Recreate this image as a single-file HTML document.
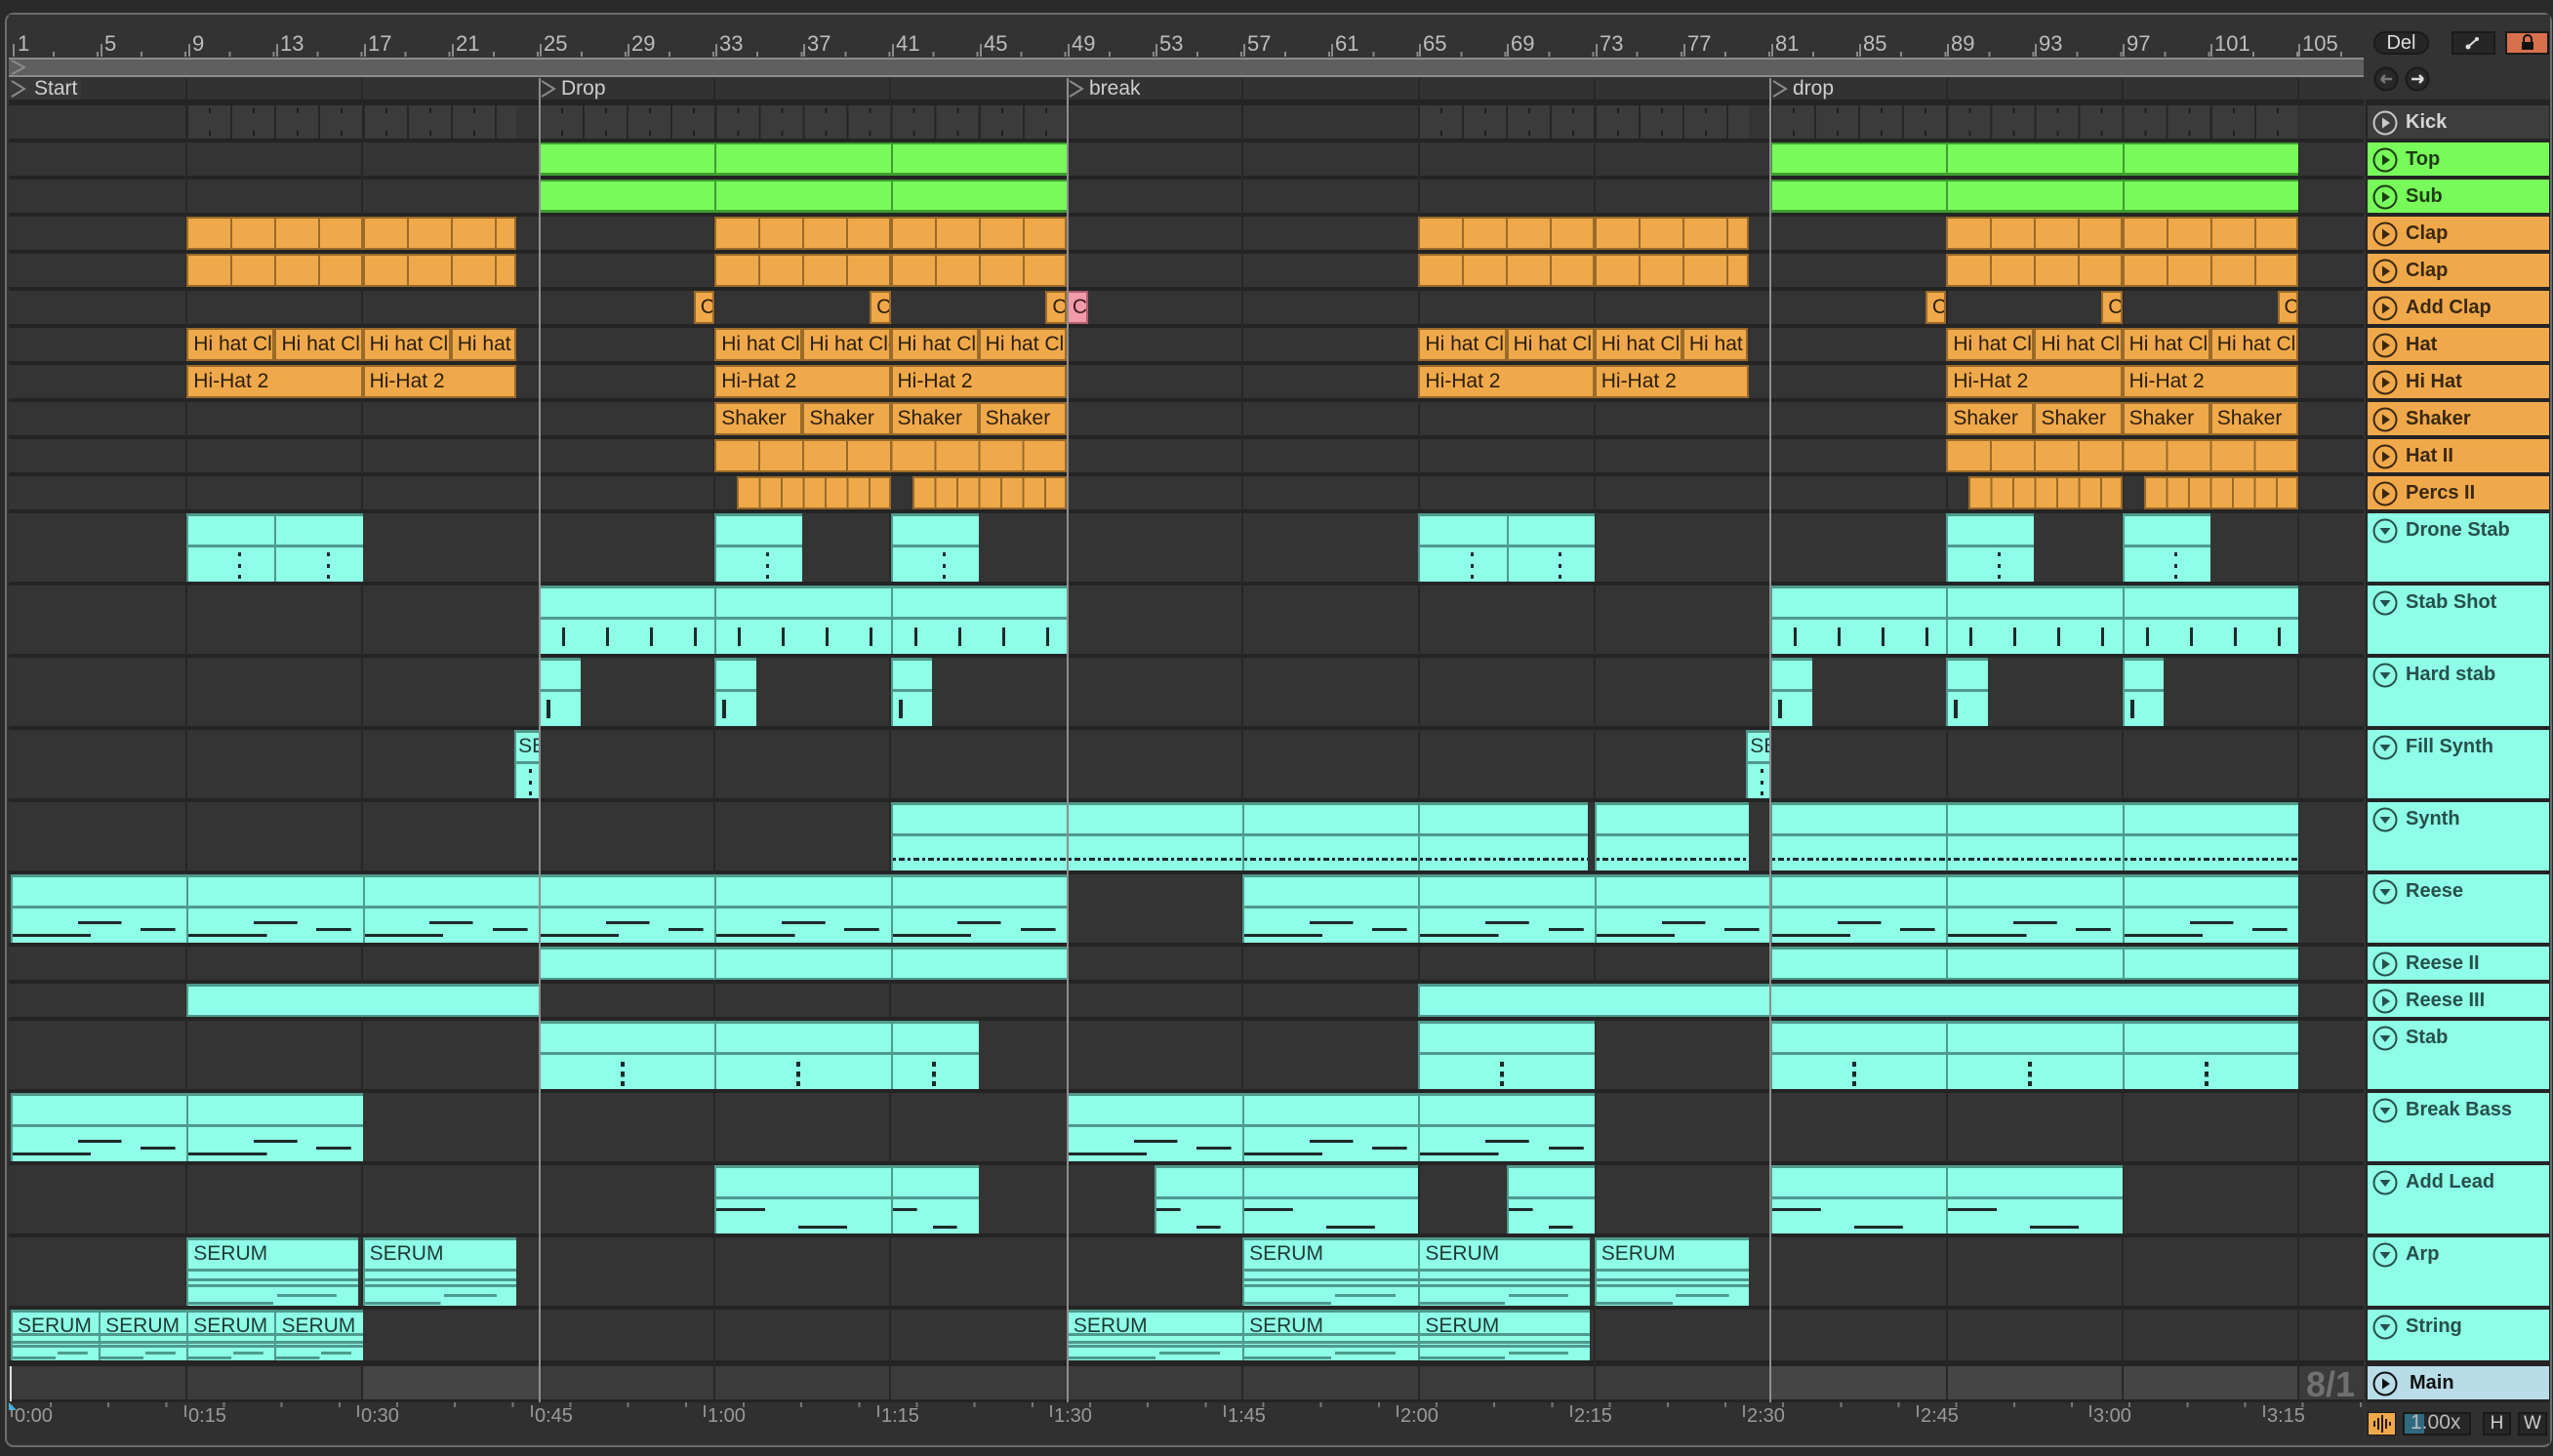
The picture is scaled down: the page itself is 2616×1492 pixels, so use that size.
<!DOCTYPE html>
<html><head><meta charset="utf-8"><style>
*{box-sizing:border-box;margin:0;padding:0}
body{width:2616px;height:1492px;background:#2a2a2a;position:relative;overflow:hidden;font-family:"Liberation Sans",sans-serif}
.abs{position:absolute}
.frame{position:absolute;left:5px;top:13px;width:2610px;height:1470px;border:2px solid #6c6c6c;border-radius:9px;background:#333}
.lane{position:absolute;left:9px;width:2413px;background:#343434}
.gl{position:absolute;top:104px;height:1333px;width:2px;background:#272727}
.loc{position:absolute;top:80px;height:1357px;width:2px;background:#8e8e8e;z-index:5}
.c{position:absolute;top:0;bottom:0;left:calc(11px + (var(--s) - 1) * 22.538px);width:calc((var(--e) - var(--s)) * 22.538px);overflow:hidden;white-space:nowrap}
.lane .c{margin-left:-9px}
.k{background:#3b3b3b;border-left:2px solid #262626;background-image:repeating-linear-gradient(90deg,transparent 0 43px,#262626 43px 45.076px),repeating-linear-gradient(90deg,transparent 0 21px,#1f1b1b 21px 23px,transparent 23px 45.076px);background-size:100% 100%,100% 5px;background-repeat:no-repeat,repeat-x;background-position:0 0,0 3px}
.k::after{content:"";position:absolute;left:0;right:0;bottom:3px;height:5px;background:repeating-linear-gradient(90deg,transparent 0 21px,#1f1b1b 21px 23px,transparent 23px 45.076px)}
.g{background:#78fb5a;border-top:2px solid #3e9e30;border-bottom:3px solid #3e9e30;border-left:2px solid #3e9e30}
.o{background:#f0a94a;border:2px solid #9a6a2a;color:#2a1e0c;font:21px "Liberation Sans Narrow","Liberation Sans",sans-serif;line-height:30px;padding-left:5px}
.o2{background-image:repeating-linear-gradient(90deg,transparent 0 43px,#9a6a2a 43px 45.076px)}
.o1{background-image:repeating-linear-gradient(90deg,transparent 0 20.5px,#9a6a2a 20.5px 22.538px)}
.p{background:#f29aa8;border:2px solid #b06070;color:#3a1a20;font:21px "Liberation Sans Narrow","Liberation Sans",sans-serif;line-height:30px;padding-left:4px}
.cy{background:#8efee6;border-top:3px solid #4e9a8c;border-left:2px solid #4e9a8c;color:#1f3a35;font:21px "Liberation Sans Narrow","Liberation Sans",sans-serif;line-height:28px;padding-left:5px}
.cy.h::before{content:"";position:absolute;left:0;right:0;top:43%;height:3px;background:#4e9a8c}
.cy.sm{border-bottom:2px solid #4e9a8c}
.rs::after{content:"";position:absolute;left:0;right:0;top:55%;bottom:0;background:linear-gradient(#1c2a28,#1c2a28) 0 78%/45% 3px no-repeat,linear-gradient(#1c2a28,#1c2a28) 50% 30%/25% 3px no-repeat,linear-gradient(#1c2a28,#1c2a28) 92% 55%/20% 3px no-repeat}
.ss::after{content:"";position:absolute;left:0;right:0;top:60%;height:28%;background:repeating-linear-gradient(90deg,transparent 0 22px,#1c2a28 22px 25px,transparent 25px 45.076px)}
.sy::after{content:"";position:absolute;left:0;right:0;top:80%;height:3px;background:repeating-linear-gradient(90deg,#1c2a28 0 3px,transparent 3px 6px,#1c2a28 6px 12px,transparent 12px 15px)}
.dr::after{content:"";position:absolute;left:58%;top:55%;width:3px;height:40%;background:linear-gradient(#1c2a28 0 15%,transparent 15% 45%,#1c2a28 45% 60%,transparent 60% 85%,#1c2a28 85%)}
.st::after{content:"";position:absolute;left:46%;top:58%;width:4px;height:38%;background:linear-gradient(#1c2a28 0 20%,transparent 20% 40%,#1c2a28 40% 62%,transparent 62% 80%,#1c2a28 80%)}
.hs::after{content:"";position:absolute;left:6px;top:60%;width:4px;height:28%;background:#1c2a28}
.al::after{content:"";position:absolute;left:0;right:0;top:50%;bottom:0;background:linear-gradient(#1c2a28,#1c2a28) 0 25%/28% 3px no-repeat,linear-gradient(#1c2a28,#1c2a28) 65% 85%/28% 3px no-repeat}
.se::after{content:"";position:absolute;left:0;right:0;top:52%;bottom:0;background:linear-gradient(#4e9a8c,#4e9a8c) 0 15%/100% 3px no-repeat,linear-gradient(#4e9a8c,#4e9a8c) 0 35%/100% 3px no-repeat,linear-gradient(#4e9a8c,#4e9a8c) 80% 70%/35% 3px no-repeat,linear-gradient(#4e9a8c,#4e9a8c) 0 95%/50% 3px no-repeat}
.hd{position:absolute;left:2426px;width:186px;font:bold 20px "Liberation Sans","DejaVu Sans",sans-serif;padding-left:39px;line-height:34px;white-space:nowrap}
.hd svg{position:absolute;left:5px;top:5px}
.ho{background:#f0a94a;color:#3a2810}
.hg{background:#78fb5a;color:#1d3d14}
.hc{background:#8efee6;color:#26504a}
.rn{position:absolute;top:34px;font:22px "Liberation Sans Narrow","Liberation Sans",sans-serif;color:#bdbdbd;line-height:22px}
.rt{position:absolute;top:45px;width:2px;height:13px;background:#8a8a8a}
.tn{position:absolute;top:1440px;font:20px "Liberation Sans Narrow","Liberation Sans",sans-serif;color:#9a9a9a}
.tt{position:absolute;top:1440px;width:2px;height:12px;background:#8a8a8a}
.lb{position:absolute;top:80px;height:22px;font:21px "Liberation Sans Narrow","Liberation Sans",sans-serif;color:#cfcfcf;line-height:22px;padding:0 4px 0 30px;background:#383838}
</style></head><body>
<div class="frame"></div>
<!-- ruler -->
<div class="abs" style="left:9px;top:15px;width:2413px;height:44px;background:#333"></div>
<div class="abs" style="left:9px;top:53px;width:2413px;height:5px;background:repeating-linear-gradient(90deg,transparent 0 43px,#8a8a8a 43px 45px,transparent 45px 45.076px);background-position:2px 0"></div>
<div class="rt" style="left:13px"></div><div class="rt" style="left:103px"></div><div class="rt" style="left:193px"></div><div class="rt" style="left:283px"></div><div class="rt" style="left:373px"></div><div class="rt" style="left:463px"></div><div class="rt" style="left:553px"></div><div class="rt" style="left:643px"></div><div class="rt" style="left:733px"></div><div class="rt" style="left:823px"></div><div class="rt" style="left:914px"></div><div class="rt" style="left:1004px"></div><div class="rt" style="left:1094px"></div><div class="rt" style="left:1184px"></div><div class="rt" style="left:1274px"></div><div class="rt" style="left:1364px"></div><div class="rt" style="left:1454px"></div><div class="rt" style="left:1544px"></div><div class="rt" style="left:1635px"></div><div class="rt" style="left:1725px"></div><div class="rt" style="left:1815px"></div><div class="rt" style="left:1905px"></div><div class="rt" style="left:1995px"></div><div class="rt" style="left:2085px"></div><div class="rt" style="left:2175px"></div><div class="rt" style="left:2265px"></div><div class="rt" style="left:2355px"></div>
<div class="rn" style="left:18px">1</div>
<div class="rn" style="left:107px">5</div><div class="rn" style="left:197px">9</div><div class="rn" style="left:287px">13</div><div class="rn" style="left:377px">17</div><div class="rn" style="left:467px">21</div><div class="rn" style="left:557px">25</div><div class="rn" style="left:647px">29</div><div class="rn" style="left:737px">33</div><div class="rn" style="left:827px">37</div><div class="rn" style="left:918px">41</div><div class="rn" style="left:1008px">45</div><div class="rn" style="left:1098px">49</div><div class="rn" style="left:1188px">53</div><div class="rn" style="left:1278px">57</div><div class="rn" style="left:1368px">61</div><div class="rn" style="left:1458px">65</div><div class="rn" style="left:1548px">69</div><div class="rn" style="left:1639px">73</div><div class="rn" style="left:1729px">77</div><div class="rn" style="left:1819px">81</div><div class="rn" style="left:1909px">85</div><div class="rn" style="left:1999px">89</div><div class="rn" style="left:2089px">93</div><div class="rn" style="left:2179px">97</div><div class="rn" style="left:2269px">101</div><div class="rn" style="left:2359px">105</div>
<!-- scrub -->
<div class="abs" style="left:9px;top:59px;width:2413px;height:20px;background:#5f5f5f;border-top:2px solid #8c8c8c;border-bottom:2px solid #8c8c8c"></div>
<svg class="abs" style="left:10px;top:60px" width="20" height="18"><path d="M2 2 L15 9 L2 16" fill="none" stroke="#8a8a8a" stroke-width="2"/></svg>
<!-- locator row + lanes bg -->
<div class="abs" style="left:9px;top:80px;width:2413px;height:1357px;background:#242424"></div>
<div class="lane" style="top:80px;height:22px;background:#323232"></div>
<div class="lane" style="top:108px;height:34px"></div><div class="lane" style="top:146px;height:34px"></div><div class="lane" style="top:184px;height:34px"></div><div class="lane" style="top:222px;height:34px"></div><div class="lane" style="top:260px;height:34px"></div><div class="lane" style="top:298px;height:34px"></div><div class="lane" style="top:336px;height:34px"></div><div class="lane" style="top:374px;height:34px"></div><div class="lane" style="top:412px;height:34px"></div><div class="lane" style="top:450px;height:34px"></div><div class="lane" style="top:488px;height:34px"></div>
<div class="lane" style="top:526px;height:70px"></div><div class="lane" style="top:600px;height:70px"></div><div class="lane" style="top:674px;height:70px"></div><div class="lane" style="top:748px;height:70px"></div><div class="lane" style="top:822px;height:70px"></div><div class="lane" style="top:896px;height:70px"></div>
<div class="lane" style="top:970px;height:34px"></div><div class="lane" style="top:1008px;height:34px"></div>
<div class="lane" style="top:1046px;height:70px"></div><div class="lane" style="top:1120px;height:70px"></div><div class="lane" style="top:1194px;height:70px"></div><div class="lane" style="top:1268px;height:70px"></div><div class="lane" style="top:1342px;height:52px"></div>
<div class="lane" style="top:1400px;height:34px;background:#3b3b3b"></div>
<div class="abs" style="left:371px;top:1400px;width:181px;height:34px;background:#454545"></div>
<div class="abs" style="left:1814px;top:1400px;width:541px;height:34px;background:#454545"></div>
<!-- grid lines -->
<div class="gl" style="left:190px;top:80px;height:1357px"></div><div class="gl" style="left:370px;top:80px;height:1357px"></div><div class="gl" style="left:731px;top:80px;height:1357px"></div><div class="gl" style="left:911px;top:80px;height:1357px"></div><div class="gl" style="left:1272px;top:80px;height:1357px"></div><div class="gl" style="left:1453px;top:80px;height:1357px"></div><div class="gl" style="left:1633px;top:80px;height:1357px"></div><div class="gl" style="left:1994px;top:80px;height:1357px"></div><div class="gl" style="left:2174px;top:80px;height:1357px"></div><div class="gl" style="left:2354px;top:80px;height:1357px"></div>
<!-- locator labels -->
<div class="lb" style="left:9px;padding-left:26px">Start</div>
<div class="lb" style="left:553px;padding-left:22px;background:none">Drop</div>
<div class="lb" style="left:1094px;padding-left:22px;background:none">break</div>
<div class="lb" style="left:1815px;padding-left:22px;background:none">drop</div>
<svg class="abs" style="left:10px;top:81px" width="20" height="20"><path d="M2 2 L15 10 L2 18" fill="none" stroke="#8a8a8a" stroke-width="2"/></svg>
<svg class="abs" style="left:553px;top:81px" width="20" height="20"><path d="M2 2 L15 10 L2 18" fill="none" stroke="#8a8a8a" stroke-width="2"/></svg>
<svg class="abs" style="left:1094px;top:81px" width="20" height="20"><path d="M2 2 L15 10 L2 18" fill="none" stroke="#8a8a8a" stroke-width="2"/></svg>
<svg class="abs" style="left:1815px;top:81px" width="20" height="20"><path d="M2 2 L15 10 L2 18" fill="none" stroke="#8a8a8a" stroke-width="2"/></svg>

<!-- Kick -->
<div class="lane" style="top:108px;height:34px;background:transparent">
<div class="c k" style="--s:9;--e:17"></div><div class="c k" style="--s:17;--e:24"></div><div class="c k" style="--s:25;--e:49"></div><div class="c k" style="--s:65;--e:73"></div><div class="c k" style="--s:73;--e:80"></div><div class="c k" style="--s:81;--e:105"></div></div>
<!-- Top / Sub -->
<div class="lane" style="top:146px;height:34px;background:transparent"><div class="c g" style="--s:25;--e:33"></div><div class="c g" style="--s:33;--e:41"></div><div class="c g" style="--s:41;--e:49"></div><div class="c g" style="--s:81;--e:89"></div><div class="c g" style="--s:89;--e:97"></div><div class="c g" style="--s:97;--e:105"></div></div>
<div class="lane" style="top:184px;height:34px;background:transparent"><div class="c g" style="--s:25;--e:33"></div><div class="c g" style="--s:33;--e:41"></div><div class="c g" style="--s:41;--e:49"></div><div class="c g" style="--s:81;--e:89"></div><div class="c g" style="--s:89;--e:97"></div><div class="c g" style="--s:97;--e:105"></div></div>
<!-- Clap x2 -->
<div class="lane" style="top:222px;height:34px;background:transparent"><div class="c o o2" style="--s:9;--e:17"></div><div class="c o o2" style="--s:17;--e:24"></div><div class="c o o2" style="--s:33;--e:41"></div><div class="c o o2" style="--s:41;--e:49"></div><div class="c o o2" style="--s:65;--e:73"></div><div class="c o o2" style="--s:73;--e:80"></div><div class="c o o2" style="--s:89;--e:97"></div><div class="c o o2" style="--s:97;--e:105"></div></div>
<div class="lane" style="top:260px;height:34px;background:transparent"><div class="c o o2" style="--s:9;--e:17"></div><div class="c o o2" style="--s:17;--e:24"></div><div class="c o o2" style="--s:33;--e:41"></div><div class="c o o2" style="--s:41;--e:49"></div><div class="c o o2" style="--s:65;--e:73"></div><div class="c o o2" style="--s:73;--e:80"></div><div class="c o o2" style="--s:89;--e:97"></div><div class="c o o2" style="--s:97;--e:105"></div></div>
<!-- Add Clap -->
<div class="lane" style="top:298px;height:34px;background:transparent"><div class="c o" style="--s:32.05;--e:33">Clap</div><div class="c o" style="--s:40.05;--e:41">Clap</div><div class="c o" style="--s:48.05;--e:49">Clap</div><div class="c p" style="--s:49;--e:50">Clap</div><div class="c o" style="--s:88.05;--e:89">Clap</div><div class="c o" style="--s:96.05;--e:97">Clap</div><div class="c o" style="--s:104.05;--e:105">Clap</div></div>
<!-- Hat -->
<div class="lane" style="top:336px;height:34px;background:transparent"><div class="c o" style="--s:9;--e:13">Hi hat Closed</div><div class="c o" style="--s:13;--e:17">Hi hat Closed</div><div class="c o" style="--s:17;--e:21">Hi hat Closed</div><div class="c o" style="--s:21;--e:24">Hi hat Closed</div><div class="c o" style="--s:33;--e:37">Hi hat Closed</div><div class="c o" style="--s:37;--e:41">Hi hat Closed</div><div class="c o" style="--s:41;--e:45">Hi hat Closed</div><div class="c o" style="--s:45;--e:49">Hi hat Closed</div><div class="c o" style="--s:65;--e:69">Hi hat Closed</div><div class="c o" style="--s:69;--e:73">Hi hat Closed</div><div class="c o" style="--s:73;--e:77">Hi hat Closed</div><div class="c o" style="--s:77;--e:80">Hi hat Closed</div><div class="c o" style="--s:89;--e:93">Hi hat Closed</div><div class="c o" style="--s:93;--e:97">Hi hat Closed</div><div class="c o" style="--s:97;--e:101">Hi hat Closed</div><div class="c o" style="--s:101;--e:105">Hi hat Closed</div></div>
<!-- Hi Hat -->
<div class="lane" style="top:374px;height:34px;background:transparent"><div class="c o" style="--s:9;--e:17">Hi-Hat 2</div><div class="c o" style="--s:17;--e:24">Hi-Hat 2</div><div class="c o" style="--s:33;--e:41">Hi-Hat 2</div><div class="c o" style="--s:41;--e:49">Hi-Hat 2</div><div class="c o" style="--s:65;--e:73">Hi-Hat 2</div><div class="c o" style="--s:73;--e:80">Hi-Hat 2</div><div class="c o" style="--s:89;--e:97">Hi-Hat 2</div><div class="c o" style="--s:97;--e:105">Hi-Hat 2</div></div>
<!-- Shaker -->
<div class="lane" style="top:412px;height:34px;background:transparent"><div class="c o" style="--s:33;--e:37">Shaker</div><div class="c o" style="--s:37;--e:41">Shaker</div><div class="c o" style="--s:41;--e:45">Shaker</div><div class="c o" style="--s:45;--e:49">Shaker</div><div class="c o" style="--s:89;--e:93">Shaker</div><div class="c o" style="--s:93;--e:97">Shaker</div><div class="c o" style="--s:97;--e:101">Shaker</div><div class="c o" style="--s:101;--e:105">Shaker</div></div>
<!-- Hat II -->
<div class="lane" style="top:450px;height:34px;background:transparent"><div class="c o o2" style="--s:33;--e:49"></div><div class="c o o2" style="--s:89;--e:105"></div></div>
<!-- Percs II -->
<div class="lane" style="top:488px;height:34px;background:transparent"><div class="c o o1" style="--s:34;--e:41"></div><div class="c o o1" style="--s:42;--e:49"></div><div class="c o o1" style="--s:90;--e:97"></div><div class="c o o1" style="--s:98;--e:105"></div></div>
<!-- Drone Stab -->
<div class="lane" style="top:526px;height:70px;background:transparent"><div class="c cy h dr" style="--s:9;--e:13"></div><div class="c cy h dr" style="--s:13;--e:17"></div><div class="c cy h dr" style="--s:33;--e:37"></div><div class="c cy h dr" style="--s:41;--e:45"></div><div class="c cy h dr" style="--s:65;--e:69"></div><div class="c cy h dr" style="--s:69;--e:73"></div><div class="c cy h dr" style="--s:89;--e:93"></div><div class="c cy h dr" style="--s:97;--e:101"></div></div>
<!-- Stab Shot -->
<div class="lane" style="top:600px;height:70px;background:transparent"><div class="c cy h ss" style="--s:25;--e:33"></div><div class="c cy h ss" style="--s:33;--e:41"></div><div class="c cy h ss" style="--s:41;--e:49"></div><div class="c cy h ss" style="--s:81;--e:89"></div><div class="c cy h ss" style="--s:89;--e:97"></div><div class="c cy h ss" style="--s:97;--e:105"></div></div>
<!-- Hard stab -->
<div class="lane" style="top:674px;height:70px;background:transparent"><div class="c cy h hs" style="--s:25;--e:26.9"></div><div class="c cy h hs" style="--s:33;--e:34.9"></div><div class="c cy h hs" style="--s:41;--e:42.9"></div><div class="c cy h hs" style="--s:81;--e:82.9"></div><div class="c cy h hs" style="--s:89;--e:90.9"></div><div class="c cy h hs" style="--s:97;--e:98.9"></div></div>
<!-- Fill Synth -->
<div class="lane" style="top:748px;height:70px;background:transparent"><div class="c cy h dr" style="--s:23.9;--e:25;padding-left:2px">SERUM</div><div class="c cy h dr" style="--s:79.9;--e:81;padding-left:2px">SERUM</div></div>
<!-- Synth -->
<div class="lane" style="top:822px;height:70px;background:transparent"><div class="c cy h sy" style="--s:41;--e:49"></div><div class="c cy h sy" style="--s:49;--e:57"></div><div class="c cy h sy" style="--s:57;--e:65"></div><div class="c cy h sy" style="--s:65;--e:72.7"></div><div class="c cy h sy" style="--s:73;--e:80"></div><div class="c cy h sy" style="--s:81;--e:89"></div><div class="c cy h sy" style="--s:89;--e:97"></div><div class="c cy h sy" style="--s:97;--e:105"></div></div>
<!-- Reese -->
<div class="lane" style="top:896px;height:70px;background:transparent"><div class="c cy h rs" style="--s:1;--e:9"></div><div class="c cy h rs" style="--s:9;--e:17"></div><div class="c cy h rs" style="--s:17;--e:25"></div><div class="c cy h rs" style="--s:25;--e:33"></div><div class="c cy h rs" style="--s:33;--e:41"></div><div class="c cy h rs" style="--s:41;--e:49"></div><div class="c cy h rs" style="--s:57;--e:65"></div><div class="c cy h rs" style="--s:65;--e:73"></div><div class="c cy h rs" style="--s:73;--e:81"></div><div class="c cy h rs" style="--s:81;--e:89"></div><div class="c cy h rs" style="--s:89;--e:97"></div><div class="c cy h rs" style="--s:97;--e:105"></div></div>
<!-- Reese II / III -->
<div class="lane" style="top:970px;height:34px;background:transparent"><div class="c cy sm" style="--s:25;--e:33"></div><div class="c cy sm" style="--s:33;--e:41"></div><div class="c cy sm" style="--s:41;--e:49"></div><div class="c cy sm" style="--s:81;--e:89"></div><div class="c cy sm" style="--s:89;--e:97"></div><div class="c cy sm" style="--s:97;--e:105"></div></div>
<div class="lane" style="top:1008px;height:34px;background:transparent"><div class="c cy sm" style="--s:9;--e:25"></div><div class="c cy sm" style="--s:65;--e:105"></div></div>
<!-- Stab -->
<div class="lane" style="top:1046px;height:70px;background:transparent"><div class="c cy h st" style="--s:25;--e:33"></div><div class="c cy h st" style="--s:33;--e:41"></div><div class="c cy h st" style="--s:41;--e:45"></div><div class="c cy h st" style="--s:65;--e:73"></div><div class="c cy h st" style="--s:81;--e:89"></div><div class="c cy h st" style="--s:89;--e:97"></div><div class="c cy h st" style="--s:97;--e:105"></div></div>
<!-- Break Bass -->
<div class="lane" style="top:1120px;height:70px;background:transparent"><div class="c cy h rs" style="--s:1;--e:9"></div><div class="c cy h rs" style="--s:9;--e:17"></div><div class="c cy h rs" style="--s:49;--e:57"></div><div class="c cy h rs" style="--s:57;--e:65"></div><div class="c cy h rs" style="--s:65;--e:73"></div></div>
<!-- Add Lead -->
<div class="lane" style="top:1194px;height:70px;background:transparent"><div class="c cy h al" style="--s:33;--e:41"></div><div class="c cy h al" style="--s:41;--e:45"></div><div class="c cy h al" style="--s:53;--e:57"></div><div class="c cy h al" style="--s:57;--e:65"></div><div class="c cy h al" style="--s:69;--e:73"></div><div class="c cy h al" style="--s:81;--e:89"></div><div class="c cy h al" style="--s:89;--e:97"></div></div>
<!-- Arp -->
<div class="lane" style="top:1268px;height:70px;background:transparent"><div class="c cy h se" style="--s:9;--e:16.8">SERUM</div><div class="c cy h se" style="--s:17;--e:24">SERUM</div><div class="c cy h se" style="--s:57;--e:65">SERUM</div><div class="c cy h se" style="--s:65;--e:72.8">SERUM</div><div class="c cy h se" style="--s:73;--e:80">SERUM</div></div>
<!-- String -->
<div class="lane" style="top:1342px;height:52px;background:transparent"><div class="c cy h se" style="--s:1;--e:5">SERUM</div><div class="c cy h se" style="--s:5;--e:9">SERUM</div><div class="c cy h se" style="--s:9;--e:13">SERUM</div><div class="c cy h se" style="--s:13;--e:17">SERUM</div><div class="c cy h se" style="--s:49;--e:57">SERUM</div><div class="c cy h se" style="--s:57;--e:65">SERUM</div><div class="c cy h se" style="--s:65;--e:72.8">SERUM</div></div>

<!-- locator lines -->
<div class="loc" style="left:552px"></div><div class="loc" style="left:1093px"></div><div class="loc" style="left:1813px"></div>
<div class="abs" style="left:10px;top:1400px;width:2px;height:36px;background:#ddd"></div>
<div class="abs" style="left:2363px;top:1398px;font:bold 36px 'Liberation Sans Narrow','Liberation Sans',sans-serif;color:#707070">8/1</div>

<!-- time ruler -->
<div class="abs" style="left:9px;top:1437px;width:2413px;height:42px;background:#303030"></div>
<div class="abs" style="left:9px;top:1437px;width:2413px;height:5px;background:repeating-linear-gradient(90deg,transparent 0 31px,#777 31px 33px,transparent 33px 59.17px);background-position:11px 0"></div>
<div class="tt" style="left:11px"></div><div class="tn" style="left:15px">0:00</div>
<div class="tt" style="left:189px"></div><div class="tn" style="left:193px">0:15</div>
<div class="tt" style="left:366px"></div><div class="tn" style="left:370px">0:30</div>
<div class="tt" style="left:544px"></div><div class="tn" style="left:548px">0:45</div>
<div class="tt" style="left:721px"></div><div class="tn" style="left:725px">1:00</div>
<div class="tt" style="left:899px"></div><div class="tn" style="left:903px">1:15</div>
<div class="tt" style="left:1076px"></div><div class="tn" style="left:1080px">1:30</div>
<div class="tt" style="left:1254px"></div><div class="tn" style="left:1258px">1:45</div>
<div class="tt" style="left:1431px"></div><div class="tn" style="left:1435px">2:00</div>
<div class="tt" style="left:1609px"></div><div class="tn" style="left:1613px">2:15</div>
<div class="tt" style="left:1786px"></div><div class="tn" style="left:1790px">2:30</div>
<div class="tt" style="left:1964px"></div><div class="tn" style="left:1968px">2:45</div>
<div class="tt" style="left:2141px"></div><div class="tn" style="left:2145px">3:00</div>
<div class="tt" style="left:2319px"></div><div class="tn" style="left:2323px">3:15</div>
<svg class="abs" style="left:9px;top:1437px" width="10" height="10"><path d="M0 0 L8 8 L0 8Z" fill="#4bb0d8"/></svg>

<!-- header panel top -->
<div class="abs" style="left:2424px;top:15px;width:189px;height:87px;background:#333"></div>
<div class="abs" style="left:2432px;top:32px;width:57px;height:24px;border-radius:12px;background:#262626;border:2px solid #1a1a1a;color:#ddd;font:20px 'Liberation Sans',sans-serif;text-align:center;line-height:20px">Del</div>
<div class="abs" style="left:2512px;top:32px;width:45px;height:24px;background:#262626;border:2px solid #1a1a1a"></div>
<svg class="abs" style="left:2524px;top:35px" width="20" height="18"><path d="M5 13 L14 5" stroke="#ddd" stroke-width="2"/><circle cx="5" cy="13" r="2.5" fill="#ddd"/><circle cx="14" cy="5" r="2" fill="#ddd"/></svg>
<div class="abs" style="left:2567px;top:32px;width:45px;height:24px;background:#d8704e;border:2px solid #1a1a1a"></div>
<svg class="abs" style="left:2581px;top:35px" width="18" height="18"><path d="M5 8 V5 a4 4 0 0 1 8 0 V8" fill="none" stroke="#111" stroke-width="2"/><rect x="3" y="8" width="12" height="8" fill="#111"/></svg>
<svg class="abs" style="left:2432px;top:68px" width="60" height="26"><circle cx="13" cy="13" r="11.5" fill="#282828" stroke="#1a1a1a" stroke-width="2"/><path d="M8 13 H19 M8 13 L12 9 M8 13 L12 17" stroke="#777" stroke-width="2.5" fill="none"/><circle cx="45" cy="13" r="11.5" fill="#282828" stroke="#1a1a1a" stroke-width="2"/><path d="M51 13 H39 M51 13 L47 9 M51 13 L47 17" stroke="#ddd" stroke-width="2.5" fill="none"/></svg>
<div class="abs" style="left:2424px;top:102px;width:189px;height:1335px;background:#242424"></div>

<!-- headers -->
<div class="hd" style="top:108px;height:34px;background:#3d3d3d;color:#d6d6d6"><svg width="26" height="26"><circle cx="13" cy="13" r="11.5" fill="none" stroke="#c8c8c8" stroke-width="2"/><path d="M10 7.5 L18 13 L10 18.5Z" fill="#c8c8c8"/></svg>Kick</div>
<div class="hd hg" style="top:146px;height:34px"><svg width="26" height="26"><circle cx="13" cy="13" r="11.5" fill="none" stroke="#1d3d14" stroke-width="2"/><path d="M10 7.5 L18 13 L10 18.5Z" fill="#1d3d14"/></svg>Top</div>
<div class="hd hg" style="top:184px;height:34px"><svg width="26" height="26"><circle cx="13" cy="13" r="11.5" fill="none" stroke="#1d3d14" stroke-width="2"/><path d="M10 7.5 L18 13 L10 18.5Z" fill="#1d3d14"/></svg>Sub</div>
<div class="hd ho" style="top:222px;height:34px"><svg width="26" height="26"><circle cx="13" cy="13" r="11.5" fill="none" stroke="#3a2810" stroke-width="2"/><path d="M10 7.5 L18 13 L10 18.5Z" fill="#3a2810"/></svg>Clap</div>
<div class="hd ho" style="top:260px;height:34px"><svg width="26" height="26"><circle cx="13" cy="13" r="11.5" fill="none" stroke="#3a2810" stroke-width="2"/><path d="M10 7.5 L18 13 L10 18.5Z" fill="#3a2810"/></svg>Clap</div>
<div class="hd ho" style="top:298px;height:34px"><svg width="26" height="26"><circle cx="13" cy="13" r="11.5" fill="none" stroke="#3a2810" stroke-width="2"/><path d="M10 7.5 L18 13 L10 18.5Z" fill="#3a2810"/></svg>Add Clap</div>
<div class="hd ho" style="top:336px;height:34px"><svg width="26" height="26"><circle cx="13" cy="13" r="11.5" fill="none" stroke="#3a2810" stroke-width="2"/><path d="M10 7.5 L18 13 L10 18.5Z" fill="#3a2810"/></svg>Hat</div>
<div class="hd ho" style="top:374px;height:34px"><svg width="26" height="26"><circle cx="13" cy="13" r="11.5" fill="none" stroke="#3a2810" stroke-width="2"/><path d="M10 7.5 L18 13 L10 18.5Z" fill="#3a2810"/></svg>Hi Hat</div>
<div class="hd ho" style="top:412px;height:34px"><svg width="26" height="26"><circle cx="13" cy="13" r="11.5" fill="none" stroke="#3a2810" stroke-width="2"/><path d="M10 7.5 L18 13 L10 18.5Z" fill="#3a2810"/></svg>Shaker</div>
<div class="hd ho" style="top:450px;height:34px"><svg width="26" height="26"><circle cx="13" cy="13" r="11.5" fill="none" stroke="#3a2810" stroke-width="2"/><path d="M10 7.5 L18 13 L10 18.5Z" fill="#3a2810"/></svg>Hat II</div>
<div class="hd ho" style="top:488px;height:34px"><svg width="26" height="26"><circle cx="13" cy="13" r="11.5" fill="none" stroke="#3a2810" stroke-width="2"/><path d="M10 7.5 L18 13 L10 18.5Z" fill="#3a2810"/></svg>Percs II</div>
<div class="hd hc" style="top:526px;height:70px"><svg width="26" height="26"><circle cx="13" cy="13" r="11.5" fill="none" stroke="#26504a" stroke-width="2"/><path d="M7.5 10 L18.5 10 L13 17Z" fill="#26504a"/></svg>Drone Stab</div>
<div class="hd hc" style="top:600px;height:70px"><svg width="26" height="26"><circle cx="13" cy="13" r="11.5" fill="none" stroke="#26504a" stroke-width="2"/><path d="M7.5 10 L18.5 10 L13 17Z" fill="#26504a"/></svg>Stab Shot</div>
<div class="hd hc" style="top:674px;height:70px"><svg width="26" height="26"><circle cx="13" cy="13" r="11.5" fill="none" stroke="#26504a" stroke-width="2"/><path d="M7.5 10 L18.5 10 L13 17Z" fill="#26504a"/></svg>Hard stab</div>
<div class="hd hc" style="top:748px;height:70px"><svg width="26" height="26"><circle cx="13" cy="13" r="11.5" fill="none" stroke="#26504a" stroke-width="2"/><path d="M7.5 10 L18.5 10 L13 17Z" fill="#26504a"/></svg>Fill Synth</div>
<div class="hd hc" style="top:822px;height:70px"><svg width="26" height="26"><circle cx="13" cy="13" r="11.5" fill="none" stroke="#26504a" stroke-width="2"/><path d="M7.5 10 L18.5 10 L13 17Z" fill="#26504a"/></svg>Synth</div>
<div class="hd hc" style="top:896px;height:70px"><svg width="26" height="26"><circle cx="13" cy="13" r="11.5" fill="none" stroke="#26504a" stroke-width="2"/><path d="M7.5 10 L18.5 10 L13 17Z" fill="#26504a"/></svg>Reese</div>
<div class="hd hc" style="top:970px;height:34px"><svg width="26" height="26"><circle cx="13" cy="13" r="11.5" fill="none" stroke="#26504a" stroke-width="2"/><path d="M10 7.5 L18 13 L10 18.5Z" fill="#26504a"/></svg>Reese II</div>
<div class="hd hc" style="top:1008px;height:34px"><svg width="26" height="26"><circle cx="13" cy="13" r="11.5" fill="none" stroke="#26504a" stroke-width="2"/><path d="M10 7.5 L18 13 L10 18.5Z" fill="#26504a"/></svg>Reese III</div>
<div class="hd hc" style="top:1046px;height:70px"><svg width="26" height="26"><circle cx="13" cy="13" r="11.5" fill="none" stroke="#26504a" stroke-width="2"/><path d="M7.5 10 L18.5 10 L13 17Z" fill="#26504a"/></svg>Stab</div>
<div class="hd hc" style="top:1120px;height:70px"><svg width="26" height="26"><circle cx="13" cy="13" r="11.5" fill="none" stroke="#26504a" stroke-width="2"/><path d="M7.5 10 L18.5 10 L13 17Z" fill="#26504a"/></svg>Break Bass</div>
<div class="hd hc" style="top:1194px;height:70px"><svg width="26" height="26"><circle cx="13" cy="13" r="11.5" fill="none" stroke="#26504a" stroke-width="2"/><path d="M7.5 10 L18.5 10 L13 17Z" fill="#26504a"/></svg>Add Lead</div>
<div class="hd hc" style="top:1268px;height:70px"><svg width="26" height="26"><circle cx="13" cy="13" r="11.5" fill="none" stroke="#26504a" stroke-width="2"/><path d="M7.5 10 L18.5 10 L13 17Z" fill="#26504a"/></svg>Arp</div>
<div class="hd hc" style="top:1342px;height:52px"><svg width="26" height="26"><circle cx="13" cy="13" r="11.5" fill="none" stroke="#26504a" stroke-width="2"/><path d="M7.5 10 L18.5 10 L13 17Z" fill="#26504a"/></svg>String</div>
<div class="hd" style="top:1400px;height:34px;background:#b8dde8;color:#111;padding-left:43px"><svg width="26" height="26"><circle cx="13" cy="13" r="11.5" fill="none" stroke="#111" stroke-width="2"/><path d="M10 7.5 L18 13 L10 18.5Z" fill="#111"/></svg>Main</div>

<!-- bottom controls -->
<div class="abs" style="left:2424px;top:1437px;width:189px;height:42px;background:#303030"></div>
<div class="abs" style="left:2426px;top:1447px;width:29px;height:24px;background:#f0a94a;border:1px solid #1a1a1a"></div>
<svg class="abs" style="left:2429px;top:1449px" width="24" height="20"><path d="M4 7v6 M8 4v12 M12 1v18 M16 5v10 M20 8v4" stroke="#2a1a0a" stroke-width="2"/></svg>
<div class="abs" style="left:2462px;top:1447px;width:70px;height:24px;background:#262626;border:2px solid #1a1a1a"></div>
<div class="abs" style="left:2464px;top:1449px;width:20px;height:20px;background:#2f6a80"></div>
<div class="abs" style="left:2470px;top:1446px;font:21px 'Liberation Sans',sans-serif;color:#bbb">1.00x</div>
<div class="abs" style="left:2544px;top:1447px;width:29px;height:24px;background:#262626;border:2px solid #1a1a1a;color:#ccc;font:19px 'Liberation Sans',sans-serif;text-align:center;line-height:20px">H</div>
<div class="abs" style="left:2580px;top:1447px;width:30px;height:24px;background:#262626;border:2px solid #1a1a1a;color:#ccc;font:19px 'Liberation Sans',sans-serif;text-align:center;line-height:20px">W</div>
</body></html>
